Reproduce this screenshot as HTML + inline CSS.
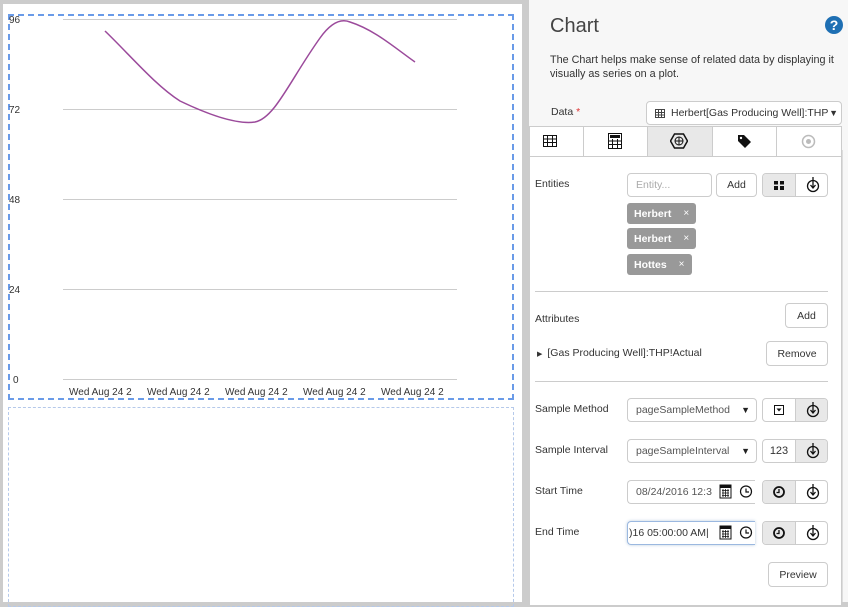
<!DOCTYPE html>
<html><head><meta charset="utf-8"><style>
*{box-sizing:border-box;margin:0;padding:0}
body{width:848px;height:602px;overflow:hidden;background:#ccc;font-family:"Liberation Sans",sans-serif;position:relative;font-size:11px;color:#333}
.a{position:absolute}
.lp{left:3px;top:4px;width:519px;height:598px;background:#fff}
.rp{left:529px;top:0;width:319px;height:602px;background:#f7f7f7}
.btn{position:absolute;border:1px solid #ccc;border-radius:4px;background:#fff;font-size:10.5px;color:#333;display:flex;align-items:center;justify-content:center}
.lbl{position:absolute;font-size:10.5px;color:#333}
.tag{position:absolute;left:627px;height:21px;background:#999;color:#fff;font-weight:bold;font-size:10.5px;border-radius:3px;padding:0 7px;display:flex;align-items:center}
.tag span{font-weight:normal;margin-left:12px;font-size:10px}
.grp{position:absolute;left:762px;width:66px;height:24px;border:1px solid #ccc;border-radius:4px;background:#fff;overflow:hidden}
.grp .h{position:absolute;top:0;width:33px;height:22px;display:flex;align-items:center;justify-content:center}
.sel{position:absolute;left:627px;width:130px;height:24px;border:1px solid #ccc;border-radius:4px;background:#fff;font-size:10.5px;color:#555;padding-left:8px;display:flex;align-items:center}
.sel b{position:absolute;right:6px;font-size:9px;color:#222}
</style></head><body>
<div class="a lp"></div>
<div class="a" style="left:8px;top:14px;width:506px;height:386px;border:2px dashed #6a9be8"></div>
<div class="a" style="left:8px;top:407px;width:506px;height:200px;border:1px dashed #b5c9ea"></div>
<svg class="a" style="left:0;top:0" width="520" height="402">
<g stroke="#ccc" stroke-width="1">
<line x1="63" y1="19.5" x2="457" y2="19.5"/><line x1="63" y1="109.5" x2="457" y2="109.5"/><line x1="63" y1="199.5" x2="457" y2="199.5"/><line x1="63" y1="289.5" x2="457" y2="289.5"/><line x1="63" y1="379.5" x2="457" y2="379.5"/></g>
<g font-family="Liberation Sans" font-size="10" fill="#333">
<text x="9" y="23">96</text><text x="9" y="113">72</text><text x="9" y="203">48</text><text x="9" y="293">24</text><text x="13" y="383">0</text>
<text x="69" y="395">Wed Aug 24 2</text><text x="147" y="395">Wed Aug 24 2</text><text x="225" y="395">Wed Aug 24 2</text><text x="303" y="395">Wed Aug 24 2</text><text x="381" y="395">Wed Aug 24 2</text></g>
<path d="M105,31 C130,55 155,85 180,101 C205,113 235,125 255,122 C275,118 290,80 320,38 C330,24 340,18 350,22 C375,30 395,48 415,62" fill="none" stroke="#9b4a9b" stroke-width="1.5"/>
</svg>
<div class="a rp"></div>
<div class="a" style="left:550px;top:15px;font-size:20px;color:#444">Chart</div>
<svg class="a" style="left:825px;top:16px" width="18" height="18"><circle cx="9" cy="9" r="9" fill="#1e6fb3"/><text x="9" y="14" text-anchor="middle" font-family="Liberation Sans" font-weight="bold" font-size="14" fill="#fff">?</text></svg>
<div class="a" style="left:550px;top:53px;font-size:10.8px;line-height:14px;color:#333;width:292px">The Chart helps make sense of related data by displaying it visually as series on a plot.</div>
<div class="lbl" style="left:551px;top:106px">Data <span style="color:#d33">*</span></div>
<div class="a" style="left:646px;top:101px;width:196px;height:24px;border:1px solid #ccc;border-radius:4px;background:#fff;font-size:10.5px;color:#333;padding-left:24px;display:flex;align-items:center;overflow:hidden;white-space:nowrap">Herbert[Gas Producing Well]:THP<span style="position:absolute;right:3px;font-size:9px;background:#fff">▼</span>
<svg class="a" style="left:8px;top:7px" width="10" height="9"><rect x=".5" y=".5" width="9" height="8" fill="none" stroke="#444"/><path d="M0 3.5H10M0 6H10M3.5 0V9M6.5 0V9" stroke="#444"/></svg></div>
<div class="a" style="left:842px;top:150px;width:6px;height:452px;background:#f7f7f7;border-left:1px solid #ddd"></div>
<div class="a" style="left:529px;top:126px;width:313px;height:480px;background:#fff;border:1px solid #ccc"></div>
<div class="a" style="left:529px;top:126px;width:313px;height:31px;border-bottom:1px solid #ccc"></div>
<div class="a" style="left:647px;top:127px;width:66px;height:29px;background:#e8e8e8"></div>
<div class="a" style="left:583px;top:127px;width:1px;height:29px;background:#ccc"></div>
<div class="a" style="left:647px;top:127px;width:1px;height:29px;background:#ccc"></div>
<div class="a" style="left:712px;top:127px;width:1px;height:29px;background:#ccc"></div>
<div class="a" style="left:776px;top:127px;width:1px;height:29px;background:#ccc"></div>
<svg class="a" style="left:543px;top:135px" width="14" height="12"><rect x=".5" y=".5" width="13" height="11" fill="none" stroke="#111"/><path d="M0 4H14M0 7.5H14M4.5 0V12M9.5 0V12" stroke="#111"/></svg>
<svg class="a" style="left:608px;top:133px" width="14" height="16"><rect x=".5" y=".5" width="13" height="15" fill="none" stroke="#111"/><rect x="2" y="2" width="10" height="3" fill="#111"/><path d="M0 8H14M0 11.5H14M4.5 6V16M9.5 6V16" stroke="#111"/></svg>
<svg class="a" style="left:670px;top:133px" width="18" height="16"><polygon points="4.5,1 13.5,1 17.5,8 13.5,15 4.5,15 0.5,8" fill="none" stroke="#111" stroke-width="1.5"/><circle cx="9" cy="8" r="4" fill="none" stroke="#111"/><path d="M5 8H13M9 4V12" stroke="#111"/></svg>
<svg class="a" style="left:737px;top:134px" width="15" height="15"><path d="M1 1H7L14 8L8 14L1 7Z" fill="#111"/><circle cx="4" cy="4" r="1.2" fill="#fff"/></svg>
<svg class="a" style="left:801px;top:134px" width="15" height="15"><circle cx="7.5" cy="7.5" r="6" fill="none" stroke="#bbb" stroke-width="1.5"/><circle cx="7.5" cy="7.5" r="2.5" fill="#bbb"/></svg>
<div class="lbl" style="left:535px;top:178px">Entities</div>
<div class="btn" style="left:627px;top:173px;width:85px;height:24px;justify-content:flex-start;padding-left:8px;color:#aaa">Entity...</div>
<div class="btn" style="left:716px;top:173px;width:41px;height:24px">Add</div>
<div class="grp" style="top:173px"><div class="h" style="left:0;background:#e8e8e8;border-right:1px solid #ccc"><svg width="10" height="9"><rect width="4" height="3.5" fill="#111"/><rect x="6" width="4" height="3.5" fill="#111"/><rect y="5" width="4" height="4" fill="#111"/><rect x="6" y="5" width="4" height="4" fill="#111"/></svg></div><div class="h" style="left:33px"><svg width="14" height="16"><circle cx="7" cy="9" r="5.5" fill="none" stroke="#111" stroke-width="1.3"/><path d="M7 0V11M4.5 8L7 11L9.5 8" fill="none" stroke="#111" stroke-width="1.3"/></svg></div></div>
<div class="tag" style="top:203px">Herbert<span>×</span></div>
<div class="tag" style="top:228px">Herbert<span>×</span></div>
<div class="tag" style="top:254px">Hottes<span>×</span></div>
<div class="a" style="left:535px;top:291px;width:293px;height:1px;background:#ccc"></div>
<div class="lbl" style="left:535px;top:313px">Attributes</div>
<div class="btn" style="left:785px;top:303px;width:43px;height:25px">Add</div>
<div class="lbl" style="left:537px;top:347px"><span style="font-size:7px;margin-right:5px">▶</span>[Gas Producing Well]:THP!Actual</div>
<div class="btn" style="left:766px;top:341px;width:62px;height:25px">Remove</div>
<div class="a" style="left:535px;top:381px;width:293px;height:1px;background:#ccc"></div>
<div class="lbl" style="left:535px;top:403px">Sample Method</div>
<div class="sel" style="top:398px">pageSampleMethod<b>▼</b></div>
<div class="grp" style="top:398px"><div class="h" style="left:0;border-right:1px solid #ccc"><svg width="10" height="10"><rect x=".5" y=".5" width="9" height="9" fill="none" stroke="#111"/><path d="M2.5 3.5H7.5L5 6.5Z" fill="#111"/></svg></div><div class="h" style="left:33px;background:#e8e8e8"><svg width="14" height="16"><circle cx="7" cy="9" r="5.5" fill="none" stroke="#111" stroke-width="1.3"/><path d="M7 0V11M4.5 8L7 11L9.5 8" fill="none" stroke="#111" stroke-width="1.3"/></svg></div></div>
<div class="lbl" style="left:535px;top:444px">Sample Interval</div>
<div class="sel" style="top:439px">pageSampleInterval<b>▼</b></div>
<div class="grp" style="top:439px"><div class="h" style="left:0;border-right:1px solid #ccc;font-size:11px;color:#333">123</div><div class="h" style="left:33px;background:#e8e8e8"><svg width="14" height="16"><circle cx="7" cy="9" r="5.5" fill="none" stroke="#111" stroke-width="1.3"/><path d="M7 0V11M4.5 8L7 11L9.5 8" fill="none" stroke="#111" stroke-width="1.3"/></svg></div></div>
<div class="lbl" style="left:535px;top:485px">Start Time</div>
<div class="a" style="left:627px;top:480px;width:128px;height:24px;border:1px solid #ccc;border-right:none;border-radius:4px 0 0 4px;background:#fff;font-size:10.5px;color:#555;padding-left:8px;line-height:22px">08/24/2016 12:3</div>
<div class="lbl" style="left:535px;top:526px">End Time</div>
<div class="a" style="left:627px;top:521px;width:128px;height:24px;border:1px solid #9bb8e0;border-right:none;border-radius:4px 0 0 4px;background:#fff;font-size:10.5px;color:#333;padding-left:1px;line-height:22px;box-shadow:0 0 3px #bcd">)16 05:00:00 AM|</div>
<svg class="a" style="left:719px;top:484px" width="36" height="60">
<g><rect x="1" y="1" width="11" height="13" fill="none" stroke="#111"/><rect x="1" y="1" width="11" height="3" fill="#111"/><path d="M3 6.5H10M3 9H10M3 11.5H10M4 5V13M6.5 5V13M9 5V13" stroke="#111" stroke-width=".8"/><circle cx="27" cy="7.5" r="5.5" fill="none" stroke="#111" stroke-width="1.2"/><path d="M27 4.5V8H30" fill="none" stroke="#111" stroke-width="1.2"/></g>
<g transform="translate(0,41)"><rect x="1" y="1" width="11" height="13" fill="none" stroke="#111"/><rect x="1" y="1" width="11" height="3" fill="#111"/><path d="M3 6.5H10M3 9H10M3 11.5H10M4 5V13M6.5 5V13M9 5V13" stroke="#111" stroke-width=".8"/><circle cx="27" cy="7.5" r="5.5" fill="none" stroke="#111" stroke-width="1.2"/><path d="M27 4.5V8H30" fill="none" stroke="#111" stroke-width="1.2"/></g></svg>
<div class="grp" style="top:480px"><div class="h" style="left:0;background:#e8e8e8;border-right:1px solid #ccc"><svg width="12" height="12"><circle cx="6" cy="6" r="5" fill="none" stroke="#111" stroke-width="1.8"/><path d="M6 3V6.5H3.5" fill="none" stroke="#111" stroke-width="1.3"/></svg></div><div class="h" style="left:33px"><svg width="14" height="16"><circle cx="7" cy="9" r="5.5" fill="none" stroke="#111" stroke-width="1.3"/><path d="M7 0V11M4.5 8L7 11L9.5 8" fill="none" stroke="#111" stroke-width="1.3"/></svg></div></div>
<div class="grp" style="top:521px"><div class="h" style="left:0;background:#e8e8e8;border-right:1px solid #ccc"><svg width="12" height="12"><circle cx="6" cy="6" r="5" fill="none" stroke="#111" stroke-width="1.8"/><path d="M6 3V6.5H3.5" fill="none" stroke="#111" stroke-width="1.3"/></svg></div><div class="h" style="left:33px"><svg width="14" height="16"><circle cx="7" cy="9" r="5.5" fill="none" stroke="#111" stroke-width="1.3"/><path d="M7 0V11M4.5 8L7 11L9.5 8" fill="none" stroke="#111" stroke-width="1.3"/></svg></div></div>
<div class="btn" style="left:768px;top:562px;width:60px;height:25px">Preview</div>
</body></html>
